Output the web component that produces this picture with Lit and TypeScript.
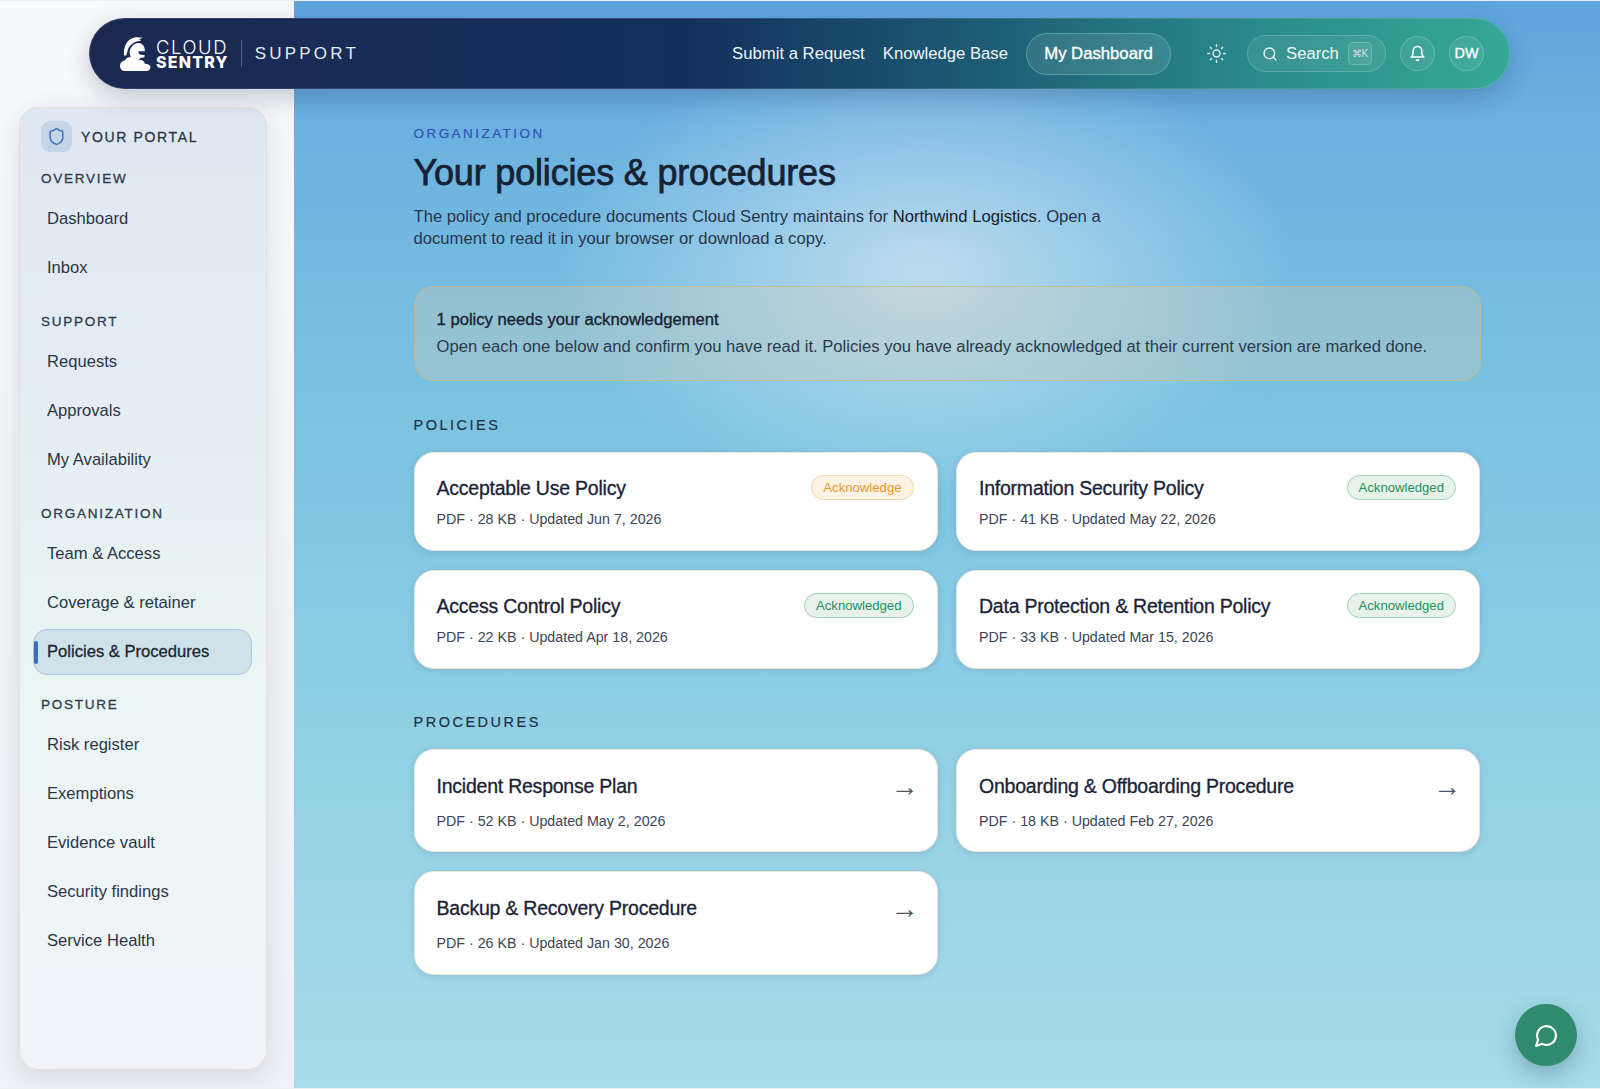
import { LitElement, html, css, svg } from "lit";
import { customElement } from "lit/decorators.js";

const groups = [
  { label: "OVERVIEW", items: ["Dashboard", "Inbox"] },
  { label: "SUPPORT", items: ["Requests", "Approvals", "My Availability"] },
  { label: "ORGANIZATION", items: ["Team & Access", "Coverage & retainer", "Policies & Procedures"] },
  { label: "POSTURE", items: ["Risk register", "Exemptions", "Evidence vault", "Security findings", "Service Health"] },
];
const policies = [
  { t: "Acceptable Use Policy", m: "PDF · 28 KB · Updated Jun 7, 2026", s: "todo" },
  { t: "Information Security Policy", m: "PDF · 41 KB · Updated May 22, 2026", s: "done" },
  { t: "Access Control Policy", m: "PDF · 22 KB · Updated Apr 18, 2026", s: "done" },
  { t: "Data Protection & Retention Policy", m: "PDF · 33 KB · Updated Mar 15, 2026", s: "done" },
];
const procedures = [
  { t: "Incident Response Plan", m: "PDF · 52 KB · Updated May 2, 2026" },
  { t: "Onboarding & Offboarding Procedure", m: "PDF · 18 KB · Updated Feb 27, 2026" },
  { t: "Backup & Recovery Procedure", m: "PDF · 26 KB · Updated Jan 30, 2026" },
];

const helmet = svg`<svg class="helmet" viewBox="0 0 31 34" fill="#fff">
  <path d="M4 18.500C3.500 10.500 6 3.500 12.500 1.200L15.500 0.300C17.500 0 20 .2 22.500 .8L19 2.500L21.500 3.800C14.500 3.800 9.500 8 7.800 13C7.200 15 6.800 16.800 6.300 18.500Z"/>
  <path d="M9.800 14C11 9 15 5.600 19 6C22.500 6.400 24.600 9.200 24.800 13L24.800 14.200L18.600 14.200C18.300 15.600 18.800 17 20 17.600L24.800 18.300L24.300 20.200L20.400 21L18 24L11.800 22C10.600 20 9.200 17 9.800 14Z"/>
  <path d="M0 28.800C0 25.800 2 23.800 4.800 23.400C6.300 20.800 9.300 19.600 12.300 20.200C14.500 20.600 16.300 21.900 17.300 23.700C18.600 22.900 20.300 22.800 21.800 23.300C23.400 23.900 24.500 25.200 24.800 26.700C27.800 26.800 30.500 28 30.500 30.300C30.500 32.500 28.600 34 26.500 34H4C1.800 34 0 31.500 0 28.800Z"/>
</svg>`;
const sun = svg`<svg class="ic sun" viewBox="0 0 24 24" fill="none" stroke="currentColor" stroke-width="1.6" stroke-linecap="round"><circle cx="12" cy="12" r="4"/><path d="M12 2v2M12 20v2M4.900 4.900l1.400 1.400M17.700 17.700l1.400 1.400M2 12h2M20 12h2M6.300 17.700l-1.400 1.400M19.100 4.900l-1.400 1.400"/></svg>`;
const search = svg`<svg class="ic search" viewBox="0 0 24 24" fill="none" stroke="currentColor" stroke-width="2" stroke-linecap="round"><circle cx="11" cy="11" r="8"/><path d="m21 21-4.300-4.300"/></svg>`;
const bell = svg`<svg class="ic bell" viewBox="0 0 24 24" fill="none" stroke="currentColor" stroke-width="2.200" stroke-linecap="round" stroke-linejoin="round"><path d="M6 8a6 6 0 0 1 12 0c0 7 3 9 3 9H3s3-2 3-9"/><path d="M10.300 21a1.940 1.940 0 0 0 3.400 0"/></svg>`;
const shield = svg`<svg class="shield" viewBox="0 0 24 24" fill="none" stroke="#3f78bf" stroke-width="2" stroke-linecap="round" stroke-linejoin="round"><path d="M20 13c0 5-3.500 7.500-7.660 8.950a1 1 0 0 1-.67-.01C7.500 20.500 4 18 4 13V6a1 1 0 0 1 1-1c2 0 4.500-1.200 6.240-2.720a1.170 1.170 0 0 1 1.520 0C14.510 3.810 17 5 19 5a1 1 0 0 1 1 1z"/></svg>`;
const chat = svg`<svg class="chat" viewBox="0 0 24 24" fill="none" stroke="#fff" stroke-width="2" stroke-linecap="round" stroke-linejoin="round"><path d="M7.900 20A9 9 0 1 0 4 16.100L2 22Z"/></svg>`;

@customElement("app-root")
export class AppRoot extends LitElement {
  static styles = css`
    :host { display: block; font-family: "Liberation Sans", Arial, sans-serif; color: #1c2536; }
    * { box-sizing: border-box; }
    .shell {
      position: relative; height: 1089px; overflow: hidden; padding-top: 18px;
      background:
        radial-gradient(ellipse 370px 230px at 630px 270px, rgba(232,240,248,.62), rgba(232,240,248,0) 100%) 294px 0 / 1306px 100% no-repeat,
        linear-gradient(180deg, #5fa4de 0%, #6db3e0 14%, #7bc3e1 38%, #90d0e5 68%, #a9dbe8 100%) 294px 0 / 1306px 100% no-repeat,
        linear-gradient(180deg, #f8f9fb, #eff1f6);
    }
    header {
      height: 71px; margin: 0 90px 0 89px; border-radius: 36px; padding: 0 25px 0 30px;
      display: flex; align-items: center; position: relative; z-index: 2;
      background: linear-gradient(90deg, #1b2950 0%, #13305d 42%, #1c5a73 62%, #2a8a8b 82%, #35a896 100%) border-box;
      border: 1px solid rgba(255,255,255,.12);
      box-shadow: 0 8px 24px rgba(24,40,80,.24);
      color: #fff;
    }
    .helmet { width: 31px; height: 34px; flex: none; }
    .brand { display: flex; flex-direction: column; margin-left: 5px; font-family: Inter, sans-serif; }
    .cloud { font-size: 18.4px; font-weight: 300; line-height: 16px; letter-spacing: 1.6px; }
    .sentry { font-size: 16px; font-weight: 800; line-height: 14px; letter-spacing: 1.2px; }
    .divider { width: 1px; height: 27px; background: rgba(255,255,255,.22); margin: 0 13px 0 12px; }
    .support { font-size: 17px; letter-spacing: 3.2px; color: #e6ebf2; }
    .grow { flex: 1; }
    .link { font-size: 16.7px; color: #f1f6f8; white-space: nowrap; }
    .link + .link { margin-left: 18px; }
    .pill-active {
      height: 42px; width: 145px; margin-left: 18px; border-radius: 21px; display: flex; align-items: center; justify-content: center;
      font-size: 16.7px; -webkit-text-stroke: .35px #fff; color: #fff;
      background: rgba(255,255,255,.1); border: 1px solid rgba(120,210,190,.45);
    }
    .ic { display: block; flex: none; }
    .sun { width: 21px; height: 21px; color: #dcecee; margin: 0 20px 0 35px; }
    .searchbox {
      height: 37px; width: 139px; border-radius: 19px; display: flex; align-items: center; padding-left: 14px;
      background: rgba(255,255,255,.07); border: 1px solid rgba(255,255,255,.18); font-size: 16.7px; color: #f2f7f8;
    }
    .search { width: 16px; height: 16px; margin-right: 8px; }
    kbd {
      margin-left: 9px; width: 24px; height: 23px; border-radius: 5px; display: flex; align-items: center; justify-content: center;
      font: 10px "Liberation Sans", sans-serif; color: rgba(255,255,255,.72);
      background: rgba(255,255,255,.08); border: 1px solid rgba(255,255,255,.2);
    }
    .round {
      width: 35px; height: 35px; border-radius: 50%; display: flex; align-items: center; justify-content: center;
      background: rgba(255,255,255,.07); border: 1px solid rgba(255,255,255,.2);
    }
    .round.b { margin-left: 14px; }
    .round.d { margin-left: 14px; font-size: 14.5px; -webkit-text-stroke: .3px #fff; color: #fff; padding-bottom: 1px; }
    .bell { width: 17px; height: 17px; }
    .body { display: flex; align-items: flex-start; margin-top: 18px; }
    aside {
      width: 248px; height: 963px; margin-left: 19px; flex: none; border-radius: 20px; padding: 13px 14px 13px 13px;
      background: linear-gradient(180deg, #dfe7f2 0%, #e4edf3 30%, #e9f5f3 58%, #eef5f6 78%, #f1f3f9 100%);
      border: 1px solid rgba(228,218,200,.7);
      box-shadow: 0 6px 26px rgba(30,45,80,.13);
    }
    .portal { display: flex; align-items: center; padding-left: 8px; height: 31px; gap: 9px; font-size: 14px; -webkit-text-stroke: .3px #2b3446; letter-spacing: 1.65px; color: #2b3446; }
    .badge-ic { width: 31px; height: 31px; border-radius: 9px; background: #c4d5e8; display: flex; align-items: center; justify-content: center; }
    .shield { width: 19px; height: 19px; }
    .group { margin-bottom: 22.8px; }
    .portal + .group { margin-top: 19px; }
    .glabel { font-size: 13.5px; height: 16px; line-height: 16px; padding-left: 8px; letter-spacing: 1.75px; color: #2f3a4c; -webkit-text-stroke: .3px #2f3a4c; margin-bottom: 9px; }
    .items { display: flex; flex-direction: column; gap: 3px; }
    .item { position: relative; height: 46px; display: flex; align-items: center; padding-left: 13px; font-size: 16.6px; color: #2b3546; border: 1px solid transparent; border-radius: 14px; }
    .item.on { background: #cfe1e9; border-color: #a9c7df; color: #1c2536; -webkit-text-stroke: .3px #1c2536; }
    .item.on::before { content: ""; position: absolute; left: 0; top: 11px; width: 3.5px; height: 23px; background: #3a6fb5; border-radius: 2px; }
    main { flex: 1; padding: 0 0 0 146.5px; min-width: 0; }
    .wrap { width: 1067px; }
    .eyebrow { font-size: 13.5px; line-height: 16px; letter-spacing: 2.45px; color: #3450b8; -webkit-text-stroke: .2px #3450b8; margin-top: 19px; }
    h1 { margin: 8px 0 0; font-size: 36px; line-height: 46px; font-weight: 400; -webkit-text-stroke: .75px #172134; letter-spacing: -.18px; color: #172134; }
    .desc { margin: 10px 0 0; width: 700px; font-size: 16.65px; line-height: 22px; color: #26354a; }
    .desc b { font-weight: 400; color: #141d2d; }
    .alert {
      margin-top: 36px; height: 95px; border-radius: 20px; padding: 20px 22px;
      background: rgba(214,204,176,.3); border: 1px solid rgba(206,186,120,.7);
    }
    .alert .t { font-size: 16.65px; line-height: 22px; -webkit-text-stroke: .35px #1a2233; color: #1a2233; margin-top: 2px; }
    .alert .s { font-size: 16.65px; line-height: 22px; margin-top: 5px; color: #2a3a4c; white-space: nowrap; }
    .sec { font-size: 14.5px; line-height: 18px; letter-spacing: 2.5px; color: #243042; -webkit-text-stroke: .2px #243042; }
    .sec.p { margin-top: 35px; }
    .sec.r { margin-top: 43.5px; }
    .grid { display: grid; grid-template-columns: 524px 524px; gap: 19px 18.5px; margin-top: 18px; }
    .card {
      background: #fff; border-radius: 20px; border: 1px solid #ece5da; padding: 0 23px 0 22px; height: 99px; position: relative;
      box-shadow: 0 2px 7px rgba(30,50,80,.13);
    }
    .card.proc { height: 103.5px; }
    .row { display: flex; justify-content: space-between; align-items: center; margin-top: 23px; height: 25px; }
    .title { font-size: 19.5px; line-height: 25px; -webkit-text-stroke: .3px #1a2336; color: #1a2336; letter-spacing: -.23px; }
    .meta { font-size: 14.25px; line-height: 18px; color: #3b4657; margin-top: 9px; }
    .proc .row { margin-top: 24px; }
    .proc .meta { margin-top: 13px; }
    .tag { height: 25px; border-radius: 13px; padding: 0 11px; display: flex; align-items: center; font-size: 13.15px; margin-top: -2px; }
    .tag.todo { color: #e8962c; background: #fdf3e4; border: 1px solid #f6d6a8; }
    .tag.done { color: #23905f; background: #e6f2ea; border: 1px solid #a3d2bb; }
    .arrow { font-size: 28px; color: #4a5566; line-height: 25px; position: relative; left: 5px; top: 0; }
    .fab {
      position: absolute; left: 1515px; top: 1004px; width: 62px; height: 62px; border-radius: 50%;
      background: #2f8a6e; display: flex; align-items: center; justify-content: center; box-shadow: 0 8px 22px rgba(20,70,80,.3);
    }
    .chat { width: 25px; height: 25px; }
    .edge { position: absolute; left: 0; right: 0; height: 1px; background: #eceef2; }
  `;

  render() {
    return html`<div class="shell">
      <div class="edge" style="top:0"></div>
      <header>
        ${helmet}
        <div class="brand"><span class="cloud">CLOUD</span><span class="sentry">SENTRY</span></div>
        <div class="divider"></div>
        <span class="support">SUPPORT</span>
        <div class="grow"></div>
        <span class="link">Submit a Request</span>
        <span class="link">Knowledge Base</span>
        <div class="pill-active">My Dashboard</div>
        ${sun}
        <div class="searchbox">${search}<span>Search</span><kbd>⌘K</kbd></div>
        <div class="round b">${bell}</div>
        <div class="round d">DW</div>
      </header>
      <div class="body">
        <aside>
          <div class="portal"><div class="badge-ic">${shield}</div>YOUR PORTAL</div>
          ${groups.map(g => html`<div class="group">
            <div class="glabel">${g.label}</div>
            <div class="items">${g.items.map(i => html`<div class="item ${i.startsWith("Policies") ? "on" : ""}">${i}</div>`)}</div>
          </div>`)}
        </aside>
        <main><div class="wrap">
          <div class="eyebrow">ORGANIZATION</div>
          <h1>Your policies &amp; procedures</h1>
          <p class="desc">The policy and procedure documents Cloud Sentry maintains for <b>Northwind Logistics</b>. Open a document to read it in your browser or download a copy.</p>
          <div class="alert">
            <div class="t">1 policy needs your acknowledgement</div>
            <div class="s">Open each one below and confirm you have read it. Policies you have already acknowledged at their current version are marked done.</div>
          </div>
          <div class="sec p">POLICIES</div>
          <div class="grid">
            ${policies.map(p => html`<div class="card">
              <div class="row"><span class="title">${p.t}</span>
                <span class="tag ${p.s}">${p.s === "todo" ? "Acknowledge" : "Acknowledged"}</span></div>
              <div class="meta">${p.m}</div>
            </div>`)}
          </div>
          <div class="sec r">PROCEDURES</div>
          <div class="grid">
            ${procedures.map(p => html`<div class="card proc">
              <div class="row"><span class="title">${p.t}</span><span class="arrow">→</span></div>
              <div class="meta">${p.m}</div>
            </div>`)}
          </div>
        </div></main>
      </div>
      <div class="fab">${chat}</div>
      <div class="edge" style="bottom:0"></div>
    </div>`;
  }
}
